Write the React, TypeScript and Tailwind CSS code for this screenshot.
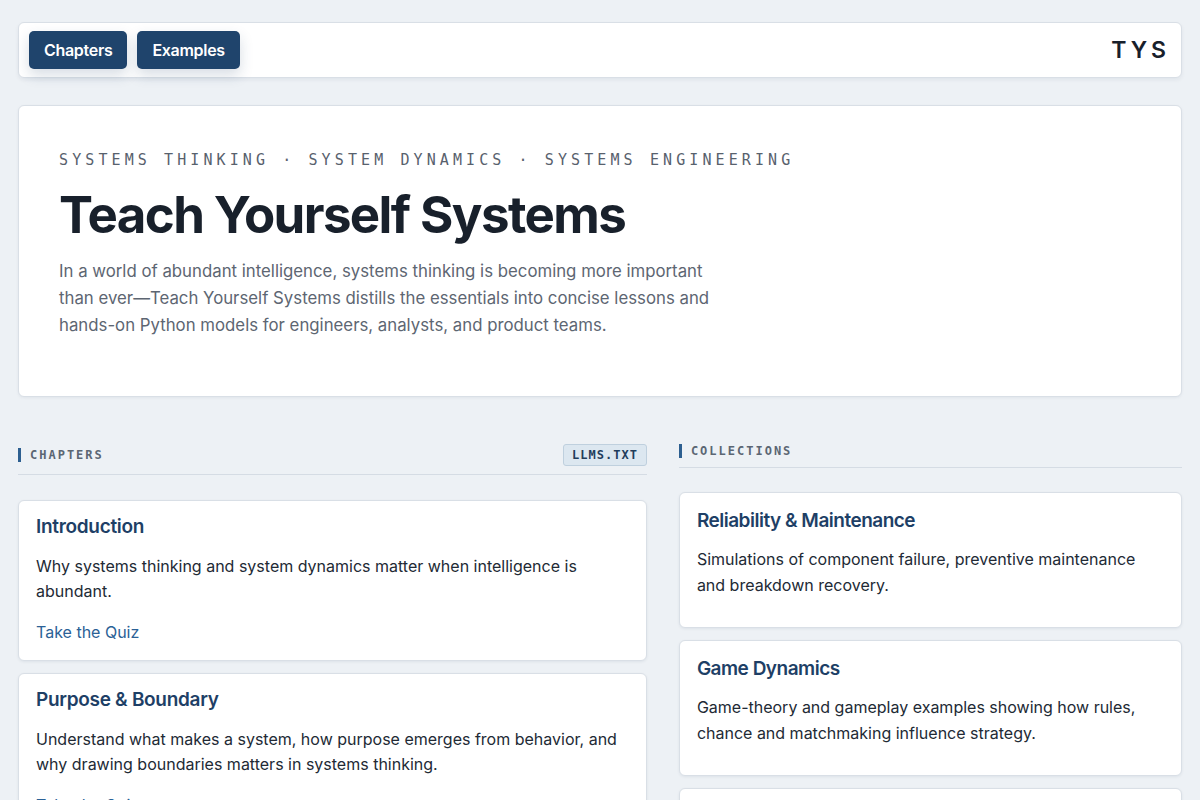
const mono = { fontFamily: '"DejaVu Sans Mono", "Liberation Mono", monospace' };

const chapters = [
  {
    title: 'Introduction',
    body: 'Why systems thinking and system dynamics matter when intelligence is abundant.',
  },
  {
    title: 'Purpose & Boundary',
    body: 'Understand what makes a system, how purpose emerges from behavior, and why drawing boundaries matters in systems thinking.',
  },
];

const collections = [
  {
    title: 'Reliability & Maintenance',
    body: 'Simulations of component failure, preventive maintenance and breakdown recovery.',
  },
  {
    title: 'Game Dynamics',
    body: 'Game-theory and gameplay examples showing how rules, chance and matchmaking influence strategy.',
  },
  {
    title: 'Queues & Flow',
    body: 'Waiting lines, service capacity and throughput explored with small simulations.',
  },
];

function SectionHeader({ label, badge }: { label: string; badge?: string }) {
  return (
    <div
      className={`flex items-center justify-between border-b border-[#d5dce4] ${
        badge ? 'pb-[8px]' : 'pb-[9px]'
      }`}
    >
      <div className="flex items-center gap-[9px]">
        <span className="h-[14px] w-[3px] bg-[#2d5f90]" />
        <span className="text-[12px] font-bold leading-[14px] tracking-[2px] text-[#5b6673]" style={mono}>
          {label}
        </span>
      </div>
      {badge && (
        <span
          className="rounded-[3px] border border-[#bfd0de] bg-[#dce7f0] px-[8px] py-[3px] text-[12px] font-bold leading-[14px] tracking-[1px] text-[#1f3d5c]"
          style={mono}
        >
          {badge}
        </span>
      )}
    </div>
  );
}

export default function App() {
  return (
    <div
      className="h-[800px] overflow-hidden bg-[#edf1f5] px-[18px] pt-[22px] text-[#1b2330]"
      style={{ fontFamily: 'Inter, "Noto Sans", sans-serif' }}
    >
      <header className="flex h-[56px] items-center justify-between rounded-[6px] border border-[#d9dfe6] bg-white pl-[10px] pr-[11px] shadow-[0_2px_4px_rgba(20,40,70,0.06)]">
        <nav className="flex gap-[10px]">
          {['Chapters', 'Examples'].map((label) => (
            <button
              key={label}
              type="button"
              className="h-[38px] rounded-[5px] bg-[#1f446c] px-[15px] text-[16px] font-semibold tracking-[-0.3px] text-white shadow-[0_6px_14px_rgba(31,68,108,0.18)]"
            >
              {label}
            </button>
          ))}
        </nav>
        <span className="text-[23px] font-semibold tracking-[4px] text-[#18202b]">TYS</span>
      </header>

      <section className="mt-[27px] h-[292px] rounded-[6px] border border-[#d9dfe6] bg-white px-[40px] pt-[44px] shadow-[0_1px_3px_rgba(20,40,70,0.06)]">
        <p className="text-[15px] leading-[20px] tracking-[4.1px] text-[#58616d]" style={mono}>
          SYSTEMS THINKING · SYSTEM DYNAMICS · SYSTEMS ENGINEERING
        </p>
        <h1 className="mt-[16px] text-[51px] font-bold leading-[58px] tracking-[-1.6px] text-[#18202b]">
          Teach Yourself Systems
        </h1>
        <p className="mt-[14px] max-w-[670px] text-[16.8px] leading-[27px] text-[#5d6672]">
          In a world of abundant intelligence, systems thinking is becoming more important than
          ever—Teach Yourself Systems distills the essentials into concise lessons and hands-on
          Python models for engineers, analysts, and product teams.
        </p>
      </section>

      <div className="mt-[47px] grid grid-cols-[5fr_4fr] gap-[32px]">
        <div>
          <SectionHeader label="CHAPTERS" badge="LLMS.TXT" />
          <div className="mt-[25px] flex flex-col gap-[12px]">
            {chapters.map((c) => (
              <article
                key={c.title}
                className="rounded-[6px] border border-[#d9dfe6] bg-white px-[17px] pb-[15px] pt-[13px] shadow-[0_1px_3px_rgba(20,40,70,0.07)]"
              >
                <h2 className="text-[19px] font-semibold leading-[26px] tracking-[-0.3px] text-[#1e3f66]">
                  {c.title}
                </h2>
                <p className="mt-[14px] text-[16px] leading-[25px] text-[#222a35]">{c.body}</p>
                <a className="mt-[16px] block text-[16px] leading-[25px] text-[#2b6196]">Take the Quiz</a>
              </article>
            ))}
          </div>
        </div>

        <div>
          <SectionHeader label="COLLECTIONS" />
          <div className="mt-[24px] flex flex-col gap-[12px]">
            {collections.map((c) => (
              <article
                key={c.title}
                className="h-[136px] rounded-[6px] border border-[#d9dfe6] bg-white px-[17px] pt-[15px] shadow-[0_1px_3px_rgba(20,40,70,0.07)]"
              >
                <h2 className="text-[19px] font-semibold leading-[26px] tracking-[-0.5px] text-[#1e3f66]">
                  {c.title}
                </h2>
                <p className="mt-[12px] text-[16px] leading-[26px] text-[#222a35]">{c.body}</p>
              </article>
            ))}
          </div>
        </div>
      </div>
    </div>
  );
}
